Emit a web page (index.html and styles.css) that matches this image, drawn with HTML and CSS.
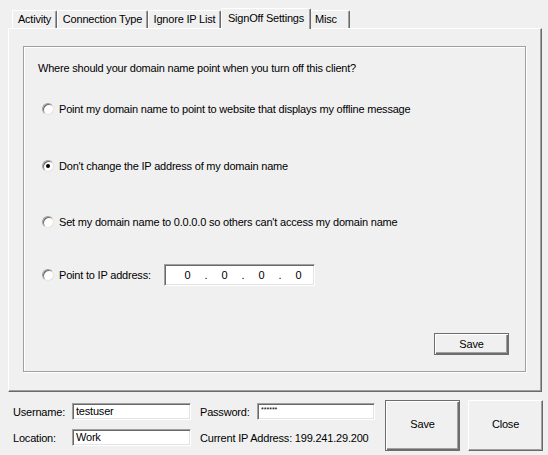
FILE: index.html
```html
<!DOCTYPE html>
<html>
<head>
<meta charset="utf-8">
<link rel="stylesheet" href="styles.css">
</head>
<body>
<div class="window">
  <div class="tabs">
    <div class="tab t-activity">Activity</div>
    <div class="tab t-conn">Connection Type</div>
    <div class="tab t-ignore">Ignore IP List</div>
    <div class="tab active t-signoff">SignOff Settings</div>
    <div class="tab t-misc">Misc</div>
  </div>
  <div class="panel">
    <div class="group">
      <div class="question">Where should your domain name point when you turn off this client?</div>
      <label class="radio-row r1"><span class="radio"></span><span>Point my domain name to point to website that displays my offline message</span></label>
      <label class="radio-row r2"><span class="radio checked"></span><span>Don't change the IP address of my domain name</span></label>
      <label class="radio-row r3"><span class="radio"></span><span>Set my domain name to 0.0.0.0 so others can't access my domain name</span></label>
      <div class="radio-row r4">
        <span class="radio"></span><span class="ip-label">Point to IP address:</span>
        <div class="ipfield">
          <span class="oct">0</span><span class="dot">.</span><span class="oct">0</span><span class="dot">.</span><span class="oct">0</span><span class="dot">.</span><span class="oct">0</span>
        </div>
      </div>
      <div class="save-row"><button class="btn small default">Save</button></div>
    </div>
  </div>
  <div class="bottom">
    <div class="fields">
      <div class="frow">
        <span class="lbl lbl-user">Username:</span>
        <div class="input w-user">testuser</div>
        <span class="lbl lbl-pass">Password:</span>
        <div class="input w-pass pw">******</div>
      </div>
      <div class="frow">
        <span class="lbl lbl-user">Location:</span>
        <div class="input w-user">Work</div>
        <span class="lbl lbl-pass">Current IP Address: 199.241.29.200</span>
      </div>
    </div>
    <button class="btn big default">Save</button>
    <button class="btn big">Close</button>
  </div>
</div>
</body>
</html>
```

FILE: styles.css
```css
* { box-sizing: border-box; }
html, body {
  margin: 0;
  padding: 0;
  background: #f0f0f0;
}
body {
  font-family: "Liberation Sans", Arial, sans-serif;
  font-size: 11px;
  letter-spacing: -0.2px;
  color: #000;
  width: 548px;
  height: 455px;
  overflow: hidden;
}
.window {
  display: flex;
  flex-direction: column;
  height: 455px;
}
.tabs {
  display: flex;
  align-items: flex-end;
  height: 28px;
  padding-left: 12px;
  position: relative;
  z-index: 2;
}
.tab {
  height: 18px;
  border-top: 1px solid #fff;
  border-left: 1px solid #fff;
  border-right: 1px solid #696969;
  box-shadow: inset -1px 0 #a0a0a0;
  border-top-left-radius: 2px;
  border-top-right-radius: 2px;
  padding-top: 2px;
  text-align: center;
  white-space: nowrap;
  background: #f0f0f0;
}
.t-activity { width: 45px; }
.t-conn { width: 91px; }
.t-ignore { width: 73px; }
.t-signoff { width: 90px; }
.t-misc { width: 40px; text-align: left; padding-left: 4px; }
.tab.active {
  height: 21px;
  margin: 0 -1px 0 0;
  padding-top: 3px;
  position: relative;
  top: 1px;
}
.panel {
  margin: 0 6px 0 8px;
  height: 364px;
  border-top: 1px solid #fff;
  border-left: 1px solid #fff;
  border-right: 1px solid #696969;
  border-bottom: 1px solid #696969;
  box-shadow: inset -1px -1px #a0a0a0;
  padding: 17px 15px 19px 14px;
  display: flex;
}
.group {
  flex: 1;
  border: 1px solid #a0a0a0;
  box-shadow: inset 1px 1px #fff, 1px 1px #fff;
  display: flex;
  flex-direction: column;
  padding: 14px 16px 16px 18px;
}
.question {
  height: 14px;
  line-height: 14px;
  margin-left: -4px;
}
.radio-row {
  display: flex;
  align-items: center;
  height: 20px;
  white-space: nowrap;
}
.r1 { margin-top: 24px; }
.r2 { margin-top: 37px; }
.r3 { margin-top: 37px; }
.r4 { margin-top: 32px; height: 22px; }
.radio {
  width: 12px;
  height: 12px;
  border-radius: 50%;
  background: #fff;
  border: 1px solid;
  border-color: #a0a0a0 #e3e3e3 #e3e3e3 #a0a0a0;
  box-shadow: inset 1px 1px #696969;
  margin-right: 5px;
  position: relative;
  flex: none;
}
.radio.checked::after {
  content: "";
  position: absolute;
  left: 3px;
  top: 3px;
  width: 4px;
  height: 4px;
  border-radius: 50%;
  background: #000;
}
.ip-label { width: 105px; }
.ipfield {
  width: 151px;
  height: 22px;
  background: #fff;
  border: 1px solid;
  border-color: #a0a0a0 #fff #fff #a0a0a0;
  box-shadow: inset 1px 1px #696969, inset -1px -1px #e3e3e3;
  display: flex;
  align-items: center;
  padding-left: 19px;
}
.oct { width: 7px; text-align: center; }
.dot { width: 30px; text-align: center; }
.save-row {
  margin-top: 47px;
  display: flex;
  justify-content: flex-end;
}
.btn {
  font-family: "Liberation Sans", Arial, sans-serif;
  font-size: 11px;
  letter-spacing: -0.2px;
  color: #000;
  background: #f0f0f0;
  border: 1px solid;
  border-color: #fff #696969 #696969 #fff;
  box-shadow: inset -1px -1px #a0a0a0;
  padding: 0;
  margin: 0;
}
.btn.default {
  border-color: #6d6d6d;
  box-shadow: inset 1px 1px #fff, inset -1px -1px #6d6d6d, inset -2px -2px #a0a0a0;
}
.btn.small {
  width: 75px;
  height: 22px;
}
.bottom {
  display: flex;
  align-items: flex-start;
  padding: 8px 0 0 13px;
}
.fields {
  display: flex;
  flex-direction: column;
  gap: 9px;
  padding-top: 3px;
}
.frow {
  display: flex;
  align-items: center;
  height: 17px;
  white-space: nowrap;
}
.lbl-user { width: 59px; }
.lbl-pass { margin-left: 9px; width: 57px; }
.input {
  height: 17px;
  background: #fff;
  border: 1px solid;
  border-color: #a0a0a0 #fff #fff #a0a0a0;
  box-shadow: inset 1px 1px #696969, inset -1px -1px #e3e3e3;
  padding: 1px 0 0 3px;
  line-height: 13px;
}
.w-user { width: 119px; }
.w-pass { width: 118px; }
.pw { font-size: 7px; line-height: 10px; letter-spacing: 0; }
.btn.big {
  width: 75px;
  height: 51px;
  padding-bottom: 4px;
}
.bottom .btn.default { margin-left: 10px; }
.bottom .btn.big + .btn.big { margin-left: 8px; }
```
